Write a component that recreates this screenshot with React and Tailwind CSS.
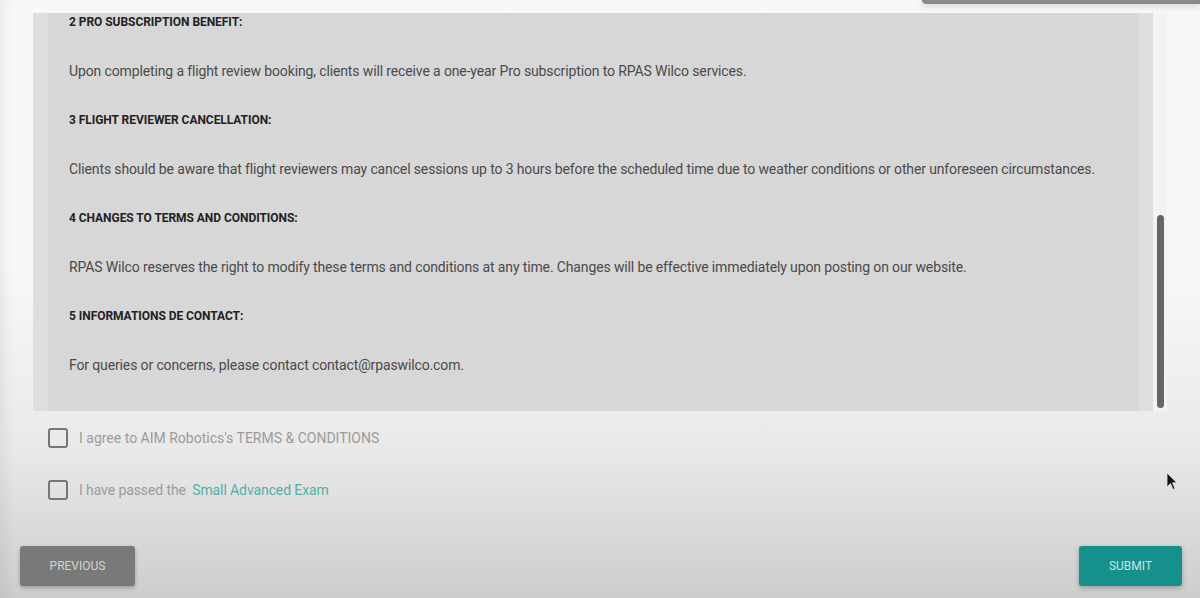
import React from "react";

const sections = [
  {
    title: "2 PRO SUBSCRIPTION BENEFIT:",
    body: "Upon completing a flight review booking, clients will receive a one-year Pro subscription to RPAS Wilco services.",
  },
  {
    title: "3 FLIGHT REVIEWER CANCELLATION:",
    body: "Clients should be aware that flight reviewers may cancel sessions up to 3 hours before the scheduled time due to weather conditions or other unforeseen circumstances.",
  },
  {
    title: "4 CHANGES TO TERMS AND CONDITIONS:",
    body: "RPAS Wilco reserves the right to modify these terms and conditions at any time. Changes will be effective immediately upon posting on our website.",
  },
  {
    title: "5 INFORMATIONS DE CONTACT:",
    body: "For queries or concerns, please contact contact@rpaswilco.com.",
  },
];

function Checkbox() {
  return (
    <span className="h-5 w-5 shrink-0 rounded-[3px] border-2 border-[#767676]" />
  );
}

function Cursor() {
  return (
    <svg viewBox="0 0 12 19" className="absolute left-[1166px] top-[472px] h-[19px] w-[12px]">
      <path
        d="M1 1 L1 15 L4.5 11.5 L7 17.5 L9 16.6 L6.6 10.8 L11 10.8 Z"
        fill="#111"
        stroke="#e5e5e5"
        strokeWidth="0.8"
        strokeLinejoin="round"
      />
    </svg>
  );
}

export default function App() {
  return (
    <div className="relative h-[598px] w-[1200px] overflow-hidden bg-linear-to-b from-[#f8f8f8] from-45% via-[#e9e9e9] via-75% to-[#cdcdcd] font-['Roboto','Liberation_Sans',sans-serif] shadow-[inset_14px_0_14px_-10px_rgba(0,0,0,0.07)]">
      {/* dropdown edge peeking at top right */}
      <div className="absolute right-0 top-0 h-[4px] w-[278px] rounded-bl-[4px] bg-[#8a8a8a] shadow-[0_2px_6px_rgba(0,0,0,0.2)]" />

      <div className="flex pl-[33px] pt-[13px]">
        <div className="flex h-[398px] w-[1120px] bg-[#dedede] px-[15px]">
          <div className="flex-1 overflow-hidden bg-[#d7d7d7] pl-[21px]">
            <div className="flex flex-col gap-[31px] pt-px">
              {sections.map((s) => (
                <React.Fragment key={s.title}>
                  <p className="text-[12px] font-bold leading-4 tracking-[-0.05px] text-[#222]">{s.title}</p>
                  <p className="text-[14px] leading-5 tracking-[-0.13px] text-[#4a4a4a]">{s.body}</p>
                </React.Fragment>
              ))}
            </div>
          </div>
        </div>
        <div className="h-[398px] w-[14px] bg-[#f3f3f3] pl-[4px] pt-[202px]">
          <div className="h-[193px] w-[7px] rounded-full bg-[#666]" />
        </div>
      </div>

      <div className="ml-[48px] mt-[17px] flex flex-col gap-[32px]">
        <label className="flex h-5 items-center gap-[11px]">
          <Checkbox />
          <span className="text-[14px] text-[#9b9b9b]">I agree to AIM Robotics's TERMS &amp; CONDITIONS</span>
        </label>
        <label className="flex h-5 items-center gap-[11px]">
          <Checkbox />
          <span className="text-[14px] tracking-[-0.1px] text-[#9b9b9b]">
            I have passed the <span className="ml-[3px] text-[#4cb2a9]">Small Advanced Exam</span>
          </span>
        </label>
      </div>

      <div className="mt-[46px] flex items-center justify-between pl-[20px] pr-[18px]">
        <button className="h-[40px] w-[115px] rounded-[3px] bg-[#797979] text-[12px] uppercase text-[#d2d2d2] shadow-[0_2px_4px_rgba(0,0,0,0.25)]">
          Previous
        </button>
        <button className="h-[40px] w-[103px] rounded-[3px] bg-[#15908a] text-[12px] uppercase text-[#c6e6e3] shadow-[0_2px_5px_rgba(0,0,0,0.25)]">
          Submit
        </button>
      </div>

      <Cursor />
    </div>
  );
}
